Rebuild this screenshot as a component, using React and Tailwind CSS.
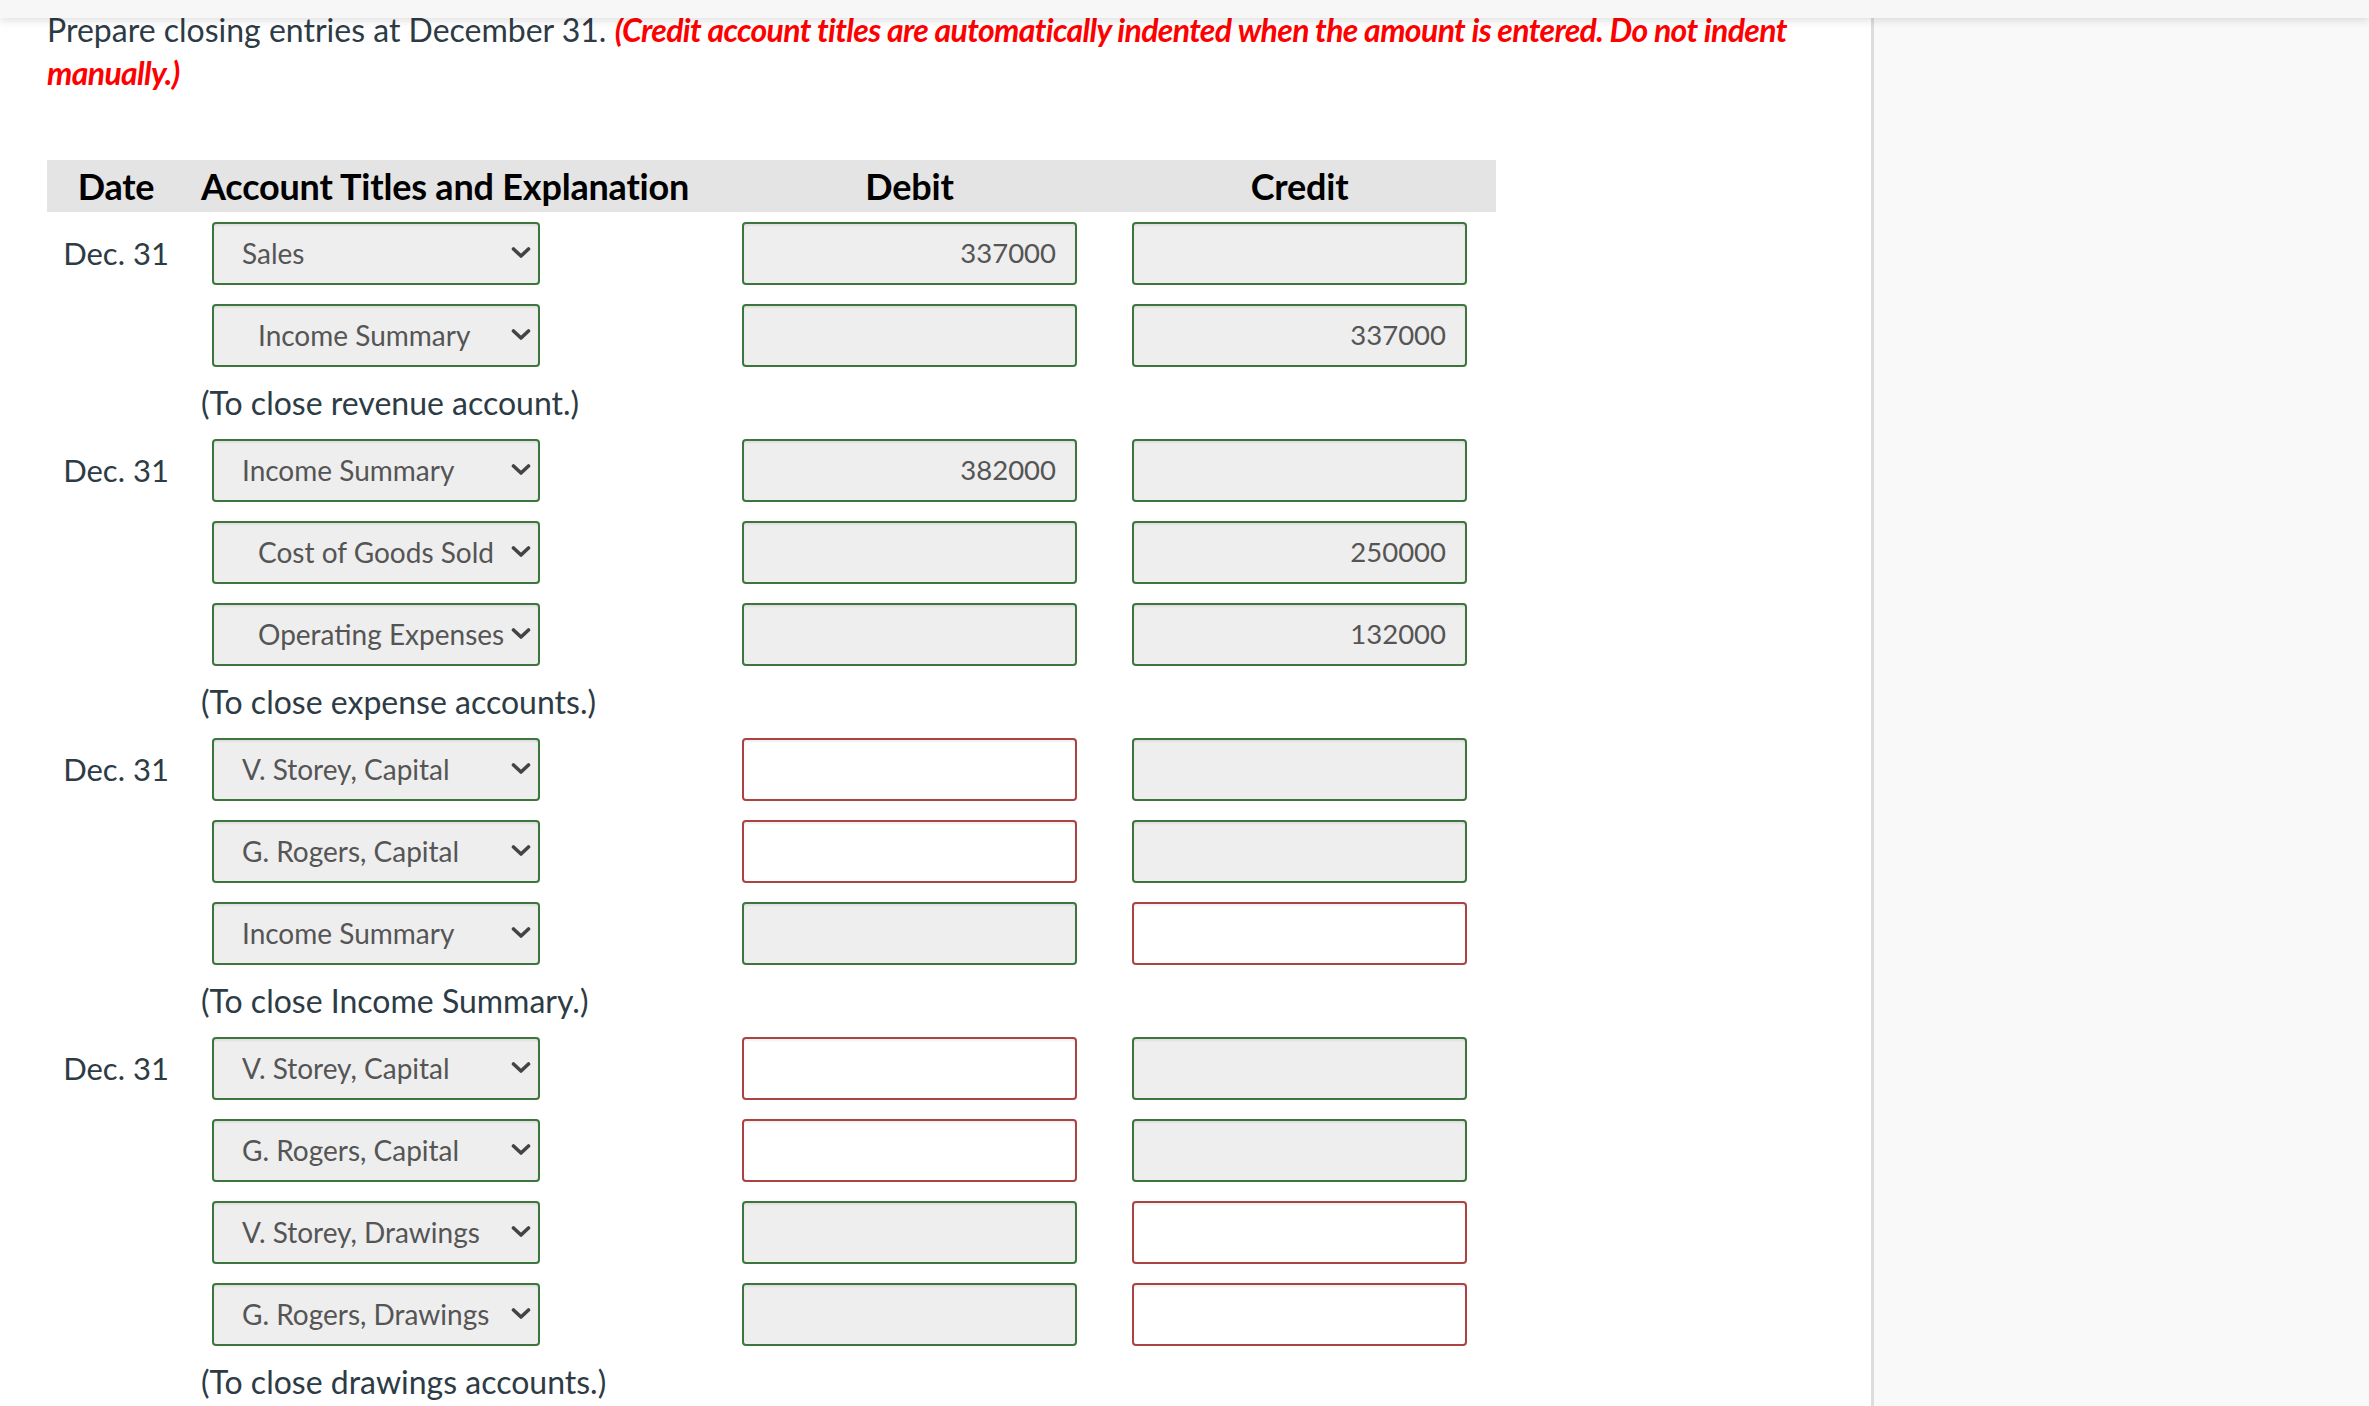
import React from "react";

const entries = [
	{
		rows: [
			{ acct: "Sales", debit: "337000", credit: "", d: "ok", c: "ok" },
			{ acct: "Income Summary", indent: true, debit: "", credit: "337000", d: "ok", c: "ok" },
		],
		note: "(To close revenue account.)",
	},
	{
		rows: [
			{ acct: "Income Summary", debit: "382000", credit: "", d: "ok", c: "ok" },
			{ acct: "Cost of Goods Sold", indent: true, debit: "", credit: "250000", d: "ok", c: "ok" },
			{ acct: "Operating Expenses", indent: true, debit: "", credit: "132000", d: "ok", c: "ok" },
		],
		note: "(To close expense accounts.)",
	},
	{
		rows: [
			{ acct: "V. Storey, Capital", debit: "", credit: "", d: "bad", c: "ok" },
			{ acct: "G. Rogers, Capital", debit: "", credit: "", d: "bad", c: "ok" },
			{ acct: "Income Summary", debit: "", credit: "", d: "ok", c: "bad" },
		],
		note: "(To close Income Summary.)",
	},
	{
		rows: [
			{ acct: "V. Storey, Capital", debit: "", credit: "", d: "bad", c: "ok" },
			{ acct: "G. Rogers, Capital", debit: "", credit: "", d: "bad", c: "ok" },
			{ acct: "V. Storey, Drawings", debit: "", credit: "", d: "ok", c: "bad" },
			{ acct: "G. Rogers, Drawings", debit: "", credit: "", d: "ok", c: "bad" },
		],
		note: "(To close drawings accounts.)",
	},
];

function Chevron() {
	return (
		<svg width="20" height="12" viewBox="0 0 20 12" className="shrink-0">
			<polyline
				points="2.5,2 10,9 17.5,2"
				fill="none"
				stroke="#444"
				strokeWidth="3.6"
				strokeLinecap="round"
				strokeLinejoin="round"
			/>
		</svg>
	);
}

function AmountBox({ value, state }) {
	const look =
		state === "bad"
			? "bg-white border-[#a94442]"
			: "bg-[#eeeeee] border-[#3c763d]";
	return (
		<div
			className={`w-[335px] h-[63px] border-2 rounded-[4px] shadow-[inset_0_2px_2px_rgba(0,0,0,0.06)] flex items-center justify-end pr-[19px] text-[27.5px] text-[#555] ${look}`}
		>
			{value}
		</div>
	);
}

function AccountSelect({ name, indent }) {
	return (
		<div className="w-[328px] h-[63px] ml-[11px] border-2 border-[#3c763d] rounded-[4px] bg-[#eeeeee] shadow-[inset_0_2px_2px_rgba(0,0,0,0.06)] flex items-center justify-between pr-[7px] text-[28px] text-[#555]">
			<span className={indent ? "pl-[44px]" : "pl-[28px]"}>{name}</span>
			<Chevron />
		</div>
	);
}

export default function App() {
	return (
		<div className="relative flex min-h-screen bg-white font-['Lato','Liberation_Sans',sans-serif]">
			<div className="absolute top-0 left-0 right-0 h-[18px] bg-[#f7f7f7] shadow-[0_3px_8px_rgba(0,0,0,0.12)] z-10" />

			<main className="w-[1871px] shrink-0 pt-[8px] pl-[47px]">
				<p className="w-[1810px] text-[32px] leading-[43px] text-[#2d3b45]">
					Prepare closing entries at December 31.{" "}
					<span className="font-bold italic text-[#ff0000] tracking-[-0.65px]">
						(Credit account titles are automatically indented when the amount is
						entered. Do not indent manually.)
					</span>
				</p>

				<div className="w-[1449px] mt-[66px]">
					<div className="h-[52px] bg-[#e4e4e4] flex items-center font-bold text-[36px] tracking-[-0.2px] text-black">
						<div className="w-[138px] text-center">Date</div>
						<div className="w-[535px] pl-[16px]">Account Titles and Explanation</div>
						<div className="w-[383px] pl-[22px]">
							<div className="w-[335px] text-center">Debit</div>
						</div>
						<div className="w-[393px] pl-[29px]">
							<div className="w-[335px] text-center">Credit</div>
						</div>
					</div>

					{entries.map((entry, i) => (
						<div key={i}>
							{entry.rows.map((row, j) => (
								<div key={j} className="h-[82px] flex items-center">
									<div className="w-[138px] text-center text-[31px] text-[#2d3b45]">
										{j === 0 ? "Dec. 31" : ""}
									</div>
									<div className="w-[535px] pl-[16px]">
										<AccountSelect name={row.acct} indent={row.indent} />
									</div>
									<div className="w-[383px] pl-[22px]">
										<AmountBox value={row.debit} state={row.d} />
									</div>
									<div className="w-[393px] pl-[29px]">
										<AmountBox value={row.credit} state={row.c} />
									</div>
								</div>
							))}
							<div className="h-[53px] flex items-center pl-[154px] text-[32px] text-[#2d3b45]">
								{entry.note}
							</div>
						</div>
					))}
				</div>
			</main>

			<aside className="flex-1 bg-[#f9f9f9] border-l-[3px] border-[#dddddd]" />
		</div>
	);
}
